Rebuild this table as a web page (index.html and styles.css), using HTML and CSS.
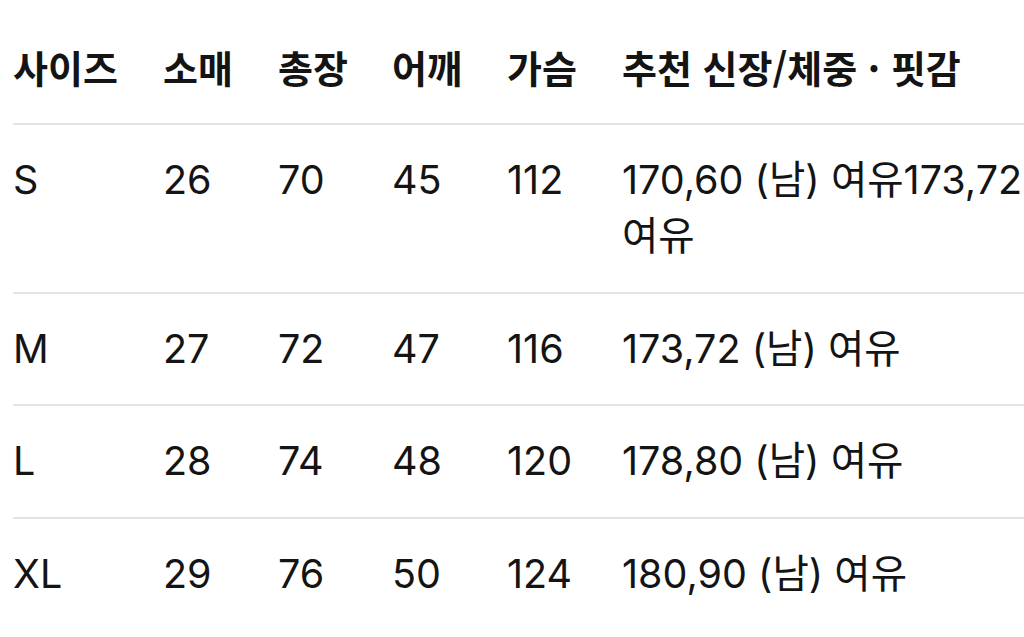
FILE: index.html
```html
<!DOCTYPE html>
<html lang="ko">
<head>
<meta charset="utf-8">
<link rel="stylesheet" href="styles.css">
</head>
<body>
<div class="page">
<table class="size-table">
  <colgroup>
    <col class="c1"><col class="c2"><col class="c3"><col class="c4"><col class="c5"><col class="c6">
  </colgroup>
  <thead>
    <tr><th>사이즈</th><th>소매</th><th>총장</th><th>어깨</th><th>가슴</th><th>추천 신장/체중 · 핏감</th></tr>
  </thead>
  <tbody>
    <tr><td>S</td><td>26</td><td>70</td><td>45</td><td>112</td><td>170,60 (남) 여유173,72 여유</td></tr>
    <tr><td>M</td><td>27</td><td>72</td><td>47</td><td>116</td><td>173,72 (남) 여유</td></tr>
    <tr><td>L</td><td>28</td><td>74</td><td>48</td><td>120</td><td>178,80 (남) 여유</td></tr>
    <tr><td>XL</td><td>29</td><td>76</td><td>50</td><td>124</td><td>180,90 (남) 여유</td></tr>
  </tbody>
</table>
</div>
</body>
</html>
```
FILE: styles.css
```css
html, body {
  margin: 0;
  padding: 0;
  background: #ffffff;
  overflow: hidden;
}
.page {
  padding: 12px 0 0 13px;
  width: 1100px;
}
.size-table {
  border-collapse: collapse;
  table-layout: fixed;
  width: 1019px;
  font-family: "Inter", "Noto Sans CJK KR", sans-serif;
  font-size: 39.5px;
  color: #141414;
}
.c1 { width: 150px; }
.c2 { width: 115px; }
.c3 { width: 114px; }
.c4 { width: 115px; }
.c5 { width: 115px; }
.c6 { width: 410px; }
.size-table th,
.size-table td {
  text-align: left;
  vertical-align: top;
  padding: 27px 0 27.5px;
  line-height: 56px;
  border-bottom: 2px solid #e4e4e4;
}
.size-table th {
  font-family: "Noto Sans CJK KR", sans-serif;
  font-weight: 700;
  font-size: 38px;
  padding-top: 27px;
  padding-bottom: 28px;
}
.size-table td {
  font-weight: 400;
}
.size-table tbody tr:last-child td {
  border-bottom: none;
}
```
